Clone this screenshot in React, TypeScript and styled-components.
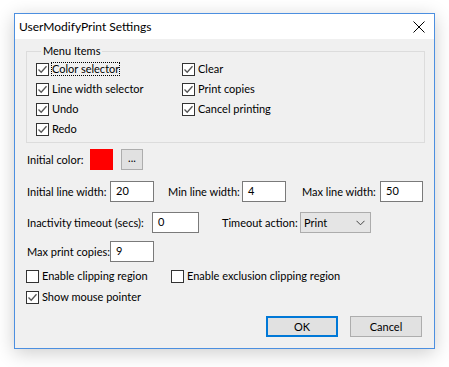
import styled, { createGlobalStyle } from "styled-components";

const GlobalStyle = createGlobalStyle`
  html, body {
    margin: 0;
    padding: 0;
    background: #ffffff;
  }
  body {
    font-family: Lato, "Noto Sans", sans-serif;
    font-size: 11px;
    color: #000;
  }
`;

const menuLeft = ["Color selector", "Line width selector", "Undo", "Redo"];
const menuRight = ["Clear", "Print copies", "Cancel printing"];

function CheckMark() {
  return (
    <svg width="11" height="11" viewBox="0 0 11 11">
      <polyline
        points="1.5,5.5 4.2,8.3 9.5,2.2"
        fill="none"
        stroke="#555"
        strokeWidth="1.3"
      />
    </svg>
  );
}

function Check({
  label,
  checked,
  focused,
}: {
  label: string;
  checked?: boolean;
  focused?: boolean;
}) {
  return (
    <CheckItem>
      <Box>{checked && <CheckMark />}</Box>
      <CheckLabel $focused={focused}>{label}</CheckLabel>
    </CheckItem>
  );
}

export default function App() {
  return (
    <Page>
      <GlobalStyle />
      <Window>
        <TitleBar>
          <Title>UserModifyPrint Settings</Title>
          <CloseButton>
            <svg width="12" height="12" viewBox="0 0 12 12">
              <path d="M0.5 0.5 L11.5 11.5 M11.5 0.5 L0.5 11.5" stroke="#000" strokeWidth="1" />
            </svg>
          </CloseButton>
        </TitleBar>

        <Client>
          <Group>
            <Legend>Menu Items</Legend>
            <MenuGrid>
              {menuLeft.map((m, i) => (
                <Check key={m} label={m} checked focused={i === 0} />
              ))}
              {menuRight.map((m) => (
                <Check key={m} label={m} checked />
              ))}
            </MenuGrid>
          </Group>

          <Row $top={6}>
            <Label $w={64}>Initial color:</Label>
            <Swatch />
            <SmallButton>...</SmallButton>
          </Row>

          <Row $top={11}>
            <Label $w={84}>Initial line width:</Label>
            <Input $w={44}>20</Input>
            <Label $w={75} $ml={13}>Min line width:</Label>
            <Input $w={44}>4</Input>
            <Label $w={79} $ml={15}>Max line width:</Label>
            <Input $w={43}>50</Input>
          </Row>

          <Row $top={10}>
            <Label $w={126}>Inactivity timeout (secs):</Label>
            <Input $w={47}>0</Input>
            <Label $w={79} $ml={22}>Timeout action:</Label>
            <Select>
              <span>Print</span>
              <svg width="9" height="6" viewBox="0 0 9 6">
                <polyline points="0.5,0.8 4.5,4.8 8.5,0.8" fill="none" stroke="#444" strokeWidth="1" />
              </svg>
            </Select>
          </Row>

          <Row $top={8}>
            <Label $w={84}>Max print copies:</Label>
            <Input $w={44}>9</Input>
          </Row>

          <CheckRow $top={6}>
            <CheckCell $w={145}>
              <Check label="Enable clipping region" />
            </CheckCell>
            <Check label="Enable exclusion clipping region" />
          </CheckRow>

          <CheckRow $top={5}>
            <Check label="Show mouse pointer" checked />
          </CheckRow>

          <Buttons>
            <DialogButton $primary>OK</DialogButton>
            <DialogButton>Cancel</DialogButton>
          </Buttons>
        </Client>
      </Window>
    </Page>
  );
}

const Page = styled.div`
  width: 449px;
  height: 367px;
  box-sizing: border-box;
  padding: 13px 0 0 14px;
  overflow: hidden;
`;

const Window = styled.div`
  width: 421px;
  height: 336px;
  box-sizing: border-box;
  border: 1px solid #4c8fe0;
  background: #f0f0f0;
  display: flex;
  flex-direction: column;
  box-shadow: 0 4px 18px rgba(0, 0, 0, 0.2);
`;

const TitleBar = styled.div`
  height: 25px;
  background: #ffffff;
  display: flex;
  align-items: center;
  justify-content: space-between;
`;

const Title = styled.div`
  padding-left: 4px;
  font-size: 12px;
  line-height: 16px;
`;

const CloseButton = styled.div`
  width: 31px;
  height: 25px;
  display: flex;
  align-items: center;
  justify-content: center;
`;

const Client = styled.div`
  flex: 1;
  display: flex;
  flex-direction: column;
  padding: 4px 9px 0 11px;
`;

const Group = styled.fieldset`
  margin: 0;
  padding: 0 0 3px 9px;
  border: 1px solid #dcdcdc;
  min-width: 0;
`;

const Legend = styled.legend`
  margin-left: 5px;
  padding: 0 2px;
  line-height: 16px;
`;

const MenuGrid = styled.div`
  display: grid;
  grid-template-columns: 146px 1fr;
  grid-template-rows: repeat(4, 20px);
  grid-auto-flow: column;
`;

const CheckItem = styled.div`
  display: flex;
  align-items: center;
  gap: 2px;
  height: 16px;
  align-self: center;
`;

const Box = styled.div`
  width: 13px;
  height: 13px;
  box-sizing: border-box;
  border: 1px solid #333;
  background: #fff;
  display: flex;
  align-items: center;
  justify-content: center;
`;

const CheckLabel = styled.span<{ $focused?: boolean }>`
  line-height: 14px;
  padding: 0 1px;
  outline: ${(p) => (p.$focused ? "1px dotted #000" : "none")};
  outline-offset: -1px;
  white-space: nowrap;
`;

const Row = styled.div<{ $top: number }>`
  display: flex;
  align-items: center;
  height: 21px;
  margin-top: ${(p) => p.$top}px;
`;

const Label = styled.span<{ $w: number; $ml?: number }>`
  width: ${(p) => p.$w}px;
  margin-left: ${(p) => p.$ml ?? 0}px;
  padding-left: 1px;
  box-sizing: border-box;
  white-space: nowrap;
`;

const Swatch = styled.div`
  width: 23px;
  height: 21px;
  background: #ff0000;
`;

const SmallButton = styled.div`
  width: 22px;
  height: 21px;
  margin-left: 8px;
  box-sizing: border-box;
  border: 1px solid #adadad;
  background: #e1e1e1;
  display: flex;
  align-items: center;
  justify-content: center;
  line-height: 12px;
  padding-bottom: 3px;
`;

const Input = styled.div<{ $w: number }>`
  width: ${(p) => p.$w}px;
  height: 21px;
  box-sizing: border-box;
  border: 1px solid #7a7a7a;
  background: #fff;
  padding: 1px 0 0 5px;
  line-height: 16px;
`;

const Select = styled.div`
  width: 71px;
  height: 21px;
  box-sizing: border-box;
  border: 1px solid #acacac;
  background: #e5e5e5;
  display: flex;
  align-items: center;
  justify-content: space-between;
  padding: 0 5px 0 3px;
`;

const CheckRow = styled.div<{ $top: number }>`
  display: flex;
  align-items: center;
  height: 16px;
  margin-top: ${(p) => p.$top}px;
`;

const CheckCell = styled.div<{ $w: number }>`
  width: ${(p) => p.$w}px;
  display: flex;
`;

const Buttons = styled.div`
  display: flex;
  justify-content: flex-end;
  gap: 12px;
  margin-top: 11px;
  padding-right: 3px;
`;

const DialogButton = styled.div<{ $primary?: boolean }>`
  width: 72px;
  height: 21px;
  box-sizing: border-box;
  border: ${(p) => (p.$primary ? "2px solid #0078d7" : "1px solid #adadad")};
  background: #e1e1e1;
  display: flex;
  align-items: center;
  justify-content: center;
`;
